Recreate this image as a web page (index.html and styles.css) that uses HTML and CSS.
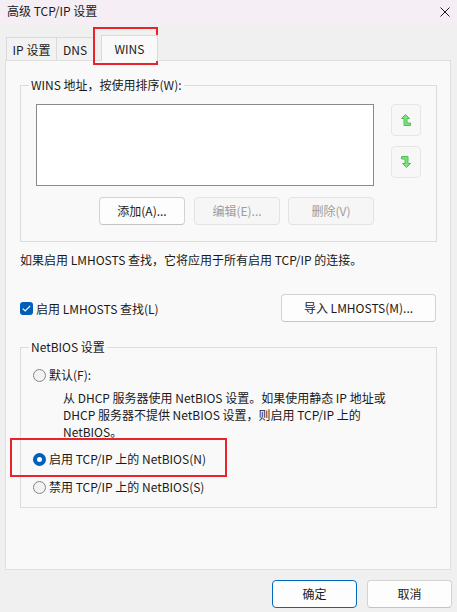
FILE: index.html
```html
<!DOCTYPE html>
<html>
<head>
	<meta charset=utf-8>
	<title>高级 TCP/IP 设置</title>
	<link rel="stylesheet" href="styles.css">
</head>
<body>
<div class=window>
	<header class=titlebar>
		<span>高级 TCP/IP 设置</span>
		<svg class=close width=10 height=10 viewBox="0 0 10 10">
			<path d="M0.5 0.5L9.5 9.5M9.5 0.5L0.5 9.5" stroke="#1a1a1a" stroke-width="1" fill="none"/>
		</svg>
	</header>
	<nav class=tabs>
		<div class="tab tab-ip">IP 设置</div>
		<div class="tab tab-dns">DNS</div>
		<div class="tab tab-wins selected">WINS</div>
	</nav>
	<section class=panel>
		<div class="group group-wins">
			<div class=group-title>WINS 地址，按使用排序(W):</div>
			<div class=wins-body>
				<div class=wins-main>
					<div class=listbox></div>
					<div class=button-row>
						<button class=btn>添加(A)...</button>
						<button class=btn disabled>编辑(E)...</button>
						<button class=btn disabled>删除(V)</button>
					</div>
				</div>
				<div class=arrows>
					<button class=arrow-btn>
						<svg width=10 height=13 viewBox="0 0 10 13">
							<path d="M4.5 0.5L8.5 4.5H6V9H9.5V11.5H3V4.5H0.5Z" fill="#7fe07f" stroke="#4cbf55" stroke-width="1" stroke-linejoin="miter"/>
						</svg>
					</button>
					<button class=arrow-btn>
						<svg width=10 height=13 viewBox="0 0 10 13">
							<path d="M0.5 0.5H7V7.5H9.5L5.5 11.5L1.5 7.5H4V3H0.5Z" fill="#7fe07f" stroke="#4cbf55" stroke-width="1" stroke-linejoin="miter"/>
						</svg>
					</button>
				</div>
			</div>
		</div>
		<p class=note>如果启用 LMHOSTS 查找，它将应用于所有启用 TCP/IP 的连接。</p>
		<div class=lmhosts-row>
			<label class=check>
				<span class=checkbox>
					<svg width=9 height=7 viewBox="0 0 9 7"><path d="M0.8 3.6L3.2 6L8.2 0.8" stroke="#fff" stroke-width="1.2" fill="none"/></svg>
				</span>
				启用 LMHOSTS 查找(L)
			</label>
			<button class="btn btn-import">导入 LMHOSTS(M)...</button>
		</div>
		<div class="group group-netbios">
			<div class=group-title>NetBIOS 设置</div>
			<label class="radio radio-first"><span class=dot></span>默认(F):</label>
			<p class=desc>从 DHCP 服务器使用 NetBIOS 设置。如果使用静态 IP 地址或<br>DHCP 服务器不提供 NetBIOS 设置，则启用 TCP/IP 上的<br>NetBIOS。</p>
			<label class="radio radio-on"><span class="dot on"></span>启用 TCP/IP 上的 NetBIOS(N)</label>
			<label class="radio radio-last"><span class=dot></span>禁用 TCP/IP 上的 NetBIOS(S)</label>
		</div>
	</section>
	<footer class=footer>
		<button class="btn btn-ok">确定</button>
		<button class=btn>取消</button>
	</footer>
	<div class="mark mark-tab"></div>
	<div class="mark mark-radio"></div>
</div>
</body>
</html>
```

FILE: styles.css
```css
* {
	margin: 0;
	padding: 0;
	box-sizing: border-box;
}
body {
	background: #f0f0f0;
	font-family: "Noto Sans CJK SC", sans-serif;
	font-size: 12px;
	line-height: 16px;
	color: #1a1a1a;
}
.window {
	position: relative;
	width: 457px;
	height: 612px;
	overflow: hidden;
}
.titlebar {
	height: 26px;
	background: #f5eef5;
	display: flex;
	align-items: center;
	justify-content: space-between;
	padding: 0 7px 4px 7px;
}
.titlebar .close {
	margin-top: 1px;
}
.tabs {
	display: flex;
	align-items: flex-end;
	height: 34px;
	padding-left: 6px;
}
.tab {
	height: 23px;
	border: 1px solid #dadada;
	border-bottom: none;
	background: #f2f2f2;
	display: flex;
	align-items: center;
	justify-content: center;
	padding-top: 1px;
}
.tab-ip {
	width: 51px;
}
.tab-dns {
	width: 37px;
	border-left: none;
}
.tab-wins {
	width: 57px;
	margin-left: 7px;
}
.tab.selected {
	height: 26px;
	margin-bottom: -1px;
	background: #f9f9f9;
	position: relative;
	z-index: 1;
	padding-top: 0;
}
.panel {
	height: 510px;
	margin: 0 6px 0 5px;
	background: #f9f9f9;
	border: 1px solid #dfdfdf;
	padding: 24px 13px 0 14px;
}
.group {
	border: 1px solid #dcdcdc;
}
.group-title {
	width: fit-content;
	margin: -9px 0 0 8px;
	padding: 0 2px;
	background: #f9f9f9;
}
.group-wins {
	height: 157px;
	padding: 0 0 0 0;
}
.wins-body {
	display: flex;
	padding: 11px 0 0 15px;
}
.listbox {
	width: 338px;
	height: 82px;
	background: #fff;
	border: 1px solid #8a8a8a;
}
.button-row {
	display: flex;
	justify-content: flex-end;
	gap: 9px;
	margin-top: 11px;
}
.btn {
	font: inherit;
	color: #1a1a1a;
	width: 86px;
	height: 28px;
	background: #fdfdfd;
	border: 1px solid #d3d3d3;
	border-bottom-color: #c4c4c4;
	border-radius: 4px;
}
.btn:disabled {
	color: #9d9d9d;
	background: #f6f6f6;
	border-color: #e3e3e3;
}
.button-row .btn:last-child {
	margin-left: -1px;
}
.arrows {
	display: flex;
	flex-direction: column;
	gap: 10px;
	margin-left: 17px;
}
.arrow-btn {
	width: 30px;
	height: 32px;
	background: #f7f7f7;
	border: 1px solid #e6e6e6;
	border-radius: 4px;
	display: flex;
	align-items: center;
	justify-content: center;
}
.note {
	margin-top: 10px;
	padding-left: 0;
}
.lmhosts-row {
	display: flex;
	align-items: center;
	justify-content: space-between;
	margin-top: 26px;
}
.check {
	display: flex;
	align-items: center;
	gap: 3px;
	margin-top: 1px;
}
.checkbox {
	width: 13px;
	height: 13px;
	border-radius: 3px;
	background: #005fb8;
	display: flex;
	align-items: center;
	justify-content: center;
}
.btn-import {
	width: 155px;
	margin-right: 1px;
}
.group-netbios {
	height: 161px;
	margin-top: 25px;
	padding: 0 0 0 12px;
}
.group-netbios .group-title {
	margin-left: -4px;
}
.radio {
	display: flex;
	align-items: center;
	gap: 3px;
	height: 16px;
}
.radio-first {
	margin-top: 12px;
}
.radio-on {
	margin-top: 11px;
}
.radio-last {
	margin-top: 12px;
}
.dot {
	width: 13px;
	height: 13px;
	border-radius: 50%;
	border: 1px solid #858585;
	background: #f3f3f3;
}
.dot.on {
	border: 4px solid #005fb8;
	background: #fff;
}
.desc {
	margin: 6px 0 0 30px;
	line-height: 17px;
	white-space: nowrap;
}
.footer {
	display: flex;
	justify-content: flex-end;
	gap: 10px;
	padding: 10px 5px 0 0;
}
.footer .btn {
	width: 85px;
}
.btn-ok {
	border: 1px solid #0067c0;
}
.mark {
	position: absolute;
	border: 2px solid #e8232b;
}
.mark-tab {
	left: 93px;
	top: 27px;
	width: 65px;
	height: 38px;
}
.mark-radio {
	left: 10px;
	top: 438px;
	width: 217px;
	height: 39px;
}
```
